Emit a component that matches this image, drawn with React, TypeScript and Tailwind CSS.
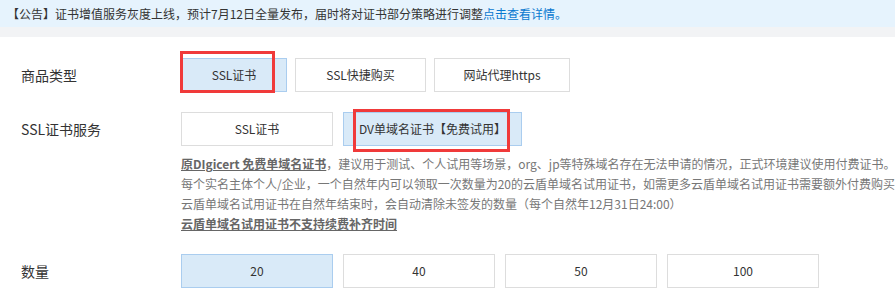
import React from "react";

const font = { fontFamily: '"Noto Sans CJK SC", "Noto Sans", sans-serif' };

function Btn({ label, w, active }: { label: string; w: string; active?: boolean }) {
  return (
    <div
      className={`${w} h-[34px] flex items-center justify-center text-[12px] text-[#333] border ${
        active ? "bg-[#d9eaf8] border-[#aacdef]" : "bg-white border-[#dddddd]"
      }`}
    >
      {label}
    </div>
  );
}

export default function App() {
  return (
    <div className="w-[895px] h-[292px] bg-white overflow-hidden relative" style={font}>
      <div className="h-[27px] bg-[#e6f3fd] flex items-center pl-[7px] text-[12px] text-[#333] leading-none whitespace-nowrap">
        【公告】证书增值服务灰度上线，预计7月12日全量发布，届时将对证书部分策略进行调整
        <span className="text-[#0a79d0]">点击查看详情。</span>
      </div>
      <div className="h-[10px] bg-[#f2f3f5]" />
      <div className="pl-[21px] pt-[21px]">
        <div className="flex items-center">
          <div className="w-[160px] text-[14px] text-[#333] leading-none">商品类型</div>
          <div className="flex gap-[8px]">
            <Btn label="SSL证书" w="w-[106px]" active />
            <Btn label="SSL快捷购买" w="w-[131px]" />
            <Btn label="网站代理https" w="w-[136px]" />
          </div>
        </div>
        <div className="flex items-center mt-[20px]">
          <div className="w-[160px] text-[14px] text-[#333] leading-none">SSL证书服务</div>
          <div className="flex gap-[10px]">
            <Btn label="SSL证书" w="w-[152px]" />
            <Btn label="DV单域名证书【免费试用】" w="w-[179px]" active />
          </div>
        </div>
        <div className="ml-[160px] mt-[8px] text-[12px] leading-[20px] text-[#777] whitespace-nowrap">
          <div>
            <span className="font-bold underline text-[#666]">原DIgicert 免费单域名证书</span>
            ，建议用于测试、个人试用等场景，org、jp等特殊域名存在无法申请的情况，正式环境建议使用付费证书。
          </div>
          <div>每个实名主体个人/企业，一个自然年内可以领取一次数量为20的云盾单域名试用证书，如需更多云盾单域名试用证书需要额外付费购买</div>
          <div>云盾单域名试用证书在自然年结束时，会自动清除未签发的数量（每个自然年12月31日24:00）</div>
          <div className="font-bold underline text-[#666]">云盾单域名试用证书不支持续费补齐时间</div>
        </div>
        <div className="flex items-center mt-[20px]">
          <div className="w-[160px] text-[14px] text-[#333] leading-none">数量</div>
          <div className="flex gap-[10px]">
            <Btn label="20" w="w-[152px]" active />
            <Btn label="40" w="w-[152px]" />
            <Btn label="50" w="w-[152px]" />
            <Btn label="100" w="w-[152px]" />
          </div>
        </div>
      </div>
      <div className="absolute left-[180px] top-[51px] w-[95px] h-[42px] border-[3px] border-[#f03a3a]" />
      <div className="absolute left-[353px] top-[109px] w-[157px] h-[43px] border-[3px] border-[#f03a3a]" />
    </div>
  );
}
